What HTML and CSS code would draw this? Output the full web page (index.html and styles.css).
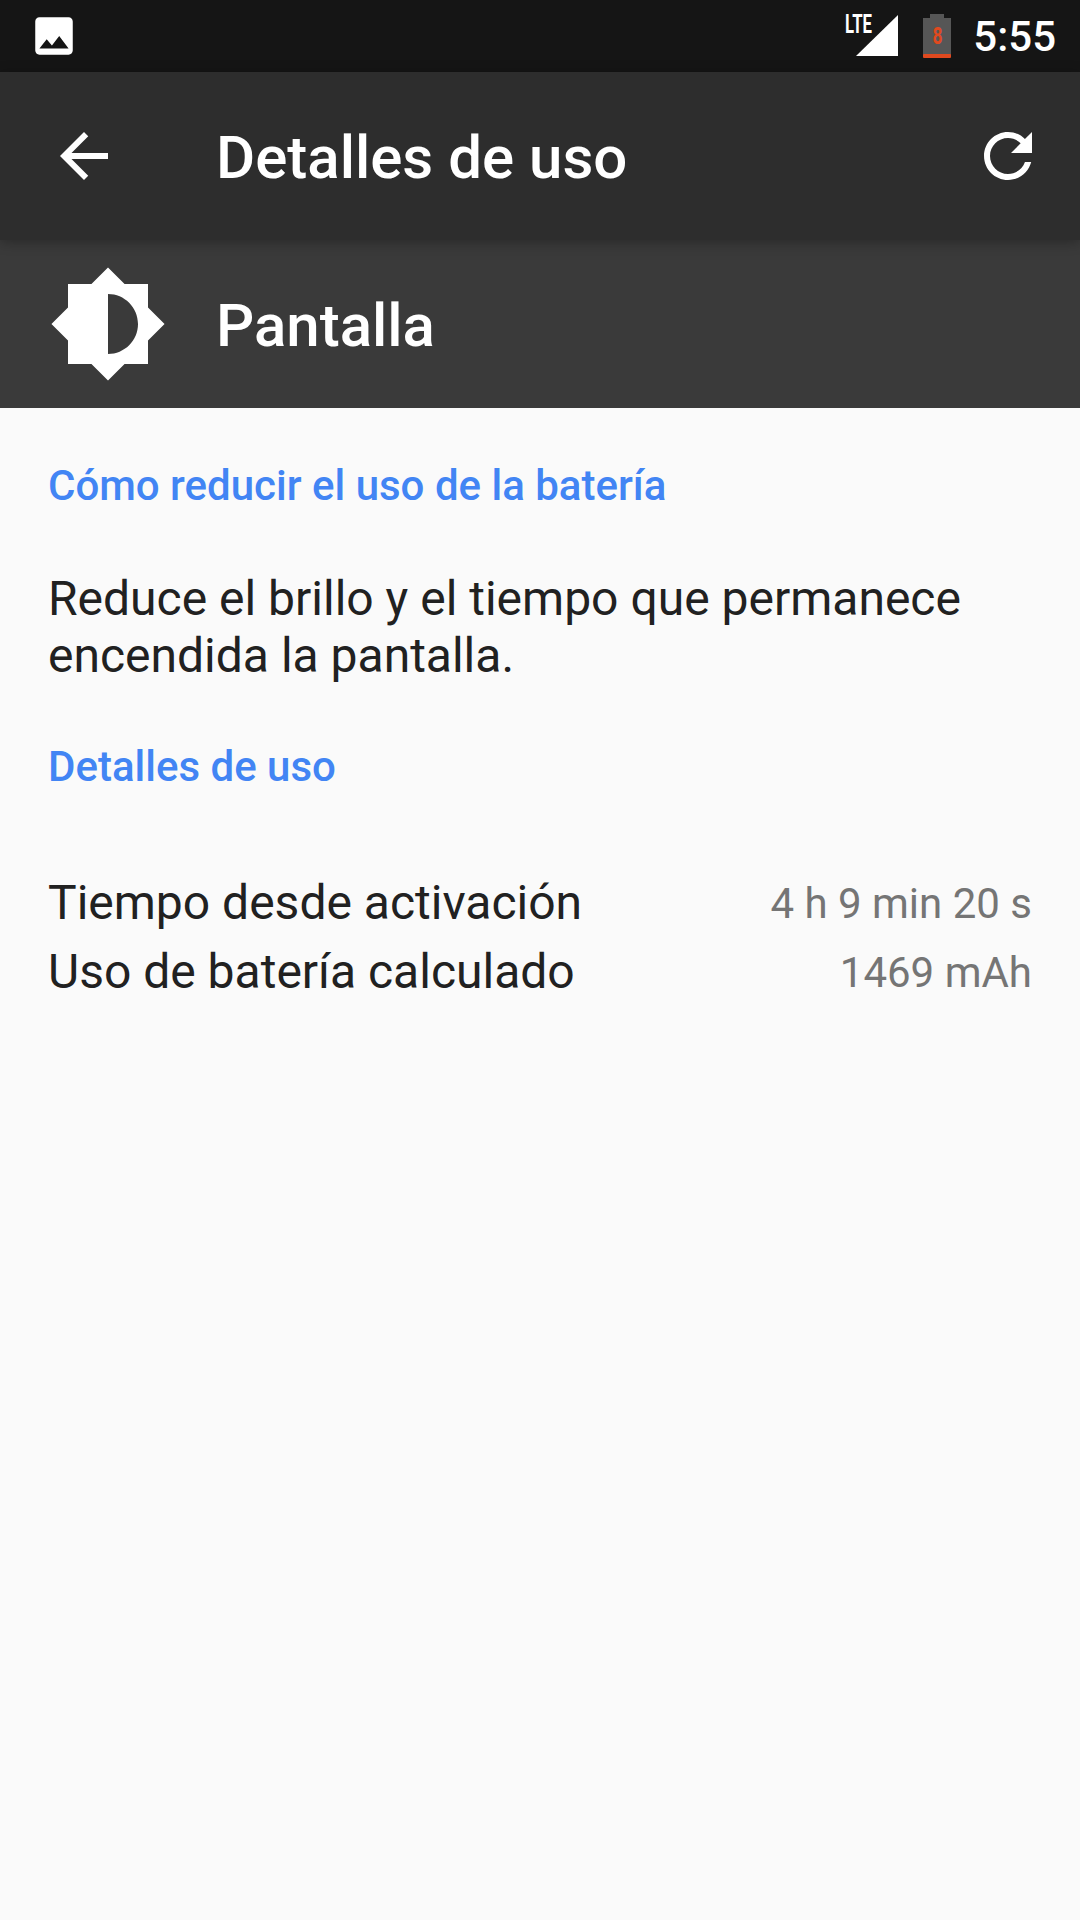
FILE: index.html
```html
<!DOCTYPE html>
<html lang="es">
<head>
  <meta charset="UTF-8" />
  <meta name="viewport" content="width=device-width, initial-scale=1.0"/>
  <title>Detalles de uso</title>
  <link rel="stylesheet" href="styles.css">
</head>
<body>
  <div class="status-bar">
    <svg class="status-image" viewBox="0 0 24 24">
      <path fill="#fff" d="M21 19V5c0-1.1-.9-2-2-2H5c-1.1 0-2 .9-2 2v14c0 1.100.9 2 2 2h14c1.100 0 2-.9 2-2zM8.500 13.500l2.500 3.010L14.500 12l4.500 6H5l3.500-4.500z"/>
    </svg>
    <div class="status-right">
      <svg class="status-signal" width="56" height="46" viewBox="0 0 56 46">
        <text class="lte" x="0" y="22" textLength="27" lengthAdjust="spacingAndGlyphs">LTE</text>
        <path fill="#fff" d="M11 45 53 4v41z"/>
      </svg>
      <svg class="status-battery" width="28" height="44" viewBox="0 0 28 44">
        <path fill="#565656" d="M7 0h14v4h7v37H0V4h7z"/>
        <rect y="40" width="28" height="4" rx="1" fill="#e0491f"/>
        <text class="battery-level" x="9.500" y="30" textLength="10" lengthAdjust="spacingAndGlyphs">8</text>
      </svg>
      <span class="status-time">5:55</span>
    </div>
  </div>

  <div class="toolbar">
    <svg class="icon" viewBox="0 0 24 24">
      <path fill="#fff" d="M20 11H7.830l5.590-5.590L12 4l-8 8 8 8 1.410-1.410L7.830 13H20v-2z"/>
    </svg>
    <h1 class="toolbar-title">Detalles de uso</h1>
    <svg class="icon" viewBox="0 0 24 24">
      <path fill="#fff" d="M17.650 6.350C16.200 4.900 14.210 4 12 4c-4.420 0-7.990 3.580-7.990 8s3.570 8 7.990 8c3.730 0 6.840-2.550 7.730-6h-2.080c-.82 2.330-3.040 4-5.650 4-3.310 0-6-2.690-6-6s2.690-6 6-6c1.660 0 3.140.69 4.220 1.780L13 11h7V4l-2.350 2.350z"/>
    </svg>
  </div>

  <div class="app-header">
    <svg class="app-icon" viewBox="0 0 24 24">
      <path fill="#fff" d="M20 15.310 23.310 12 20 8.690V4h-4.690L12 .69 8.690 4H4v4.690L.69 12 4 15.310V20h4.690L12 23.310 15.310 20H20v-4.690zM12 18V6c3.310 0 6 2.690 6 6s-2.690 6-6 6z"/>
    </svg>
    <div class="app-name">Pantalla</div>
  </div>

  <div class="content">
    <div class="section-title">Cómo reducir el uso de la batería</div>
    <p class="tip">Reduce el brillo y el tiempo que permanece encendida la pantalla.</p>
    <div class="section-title">Detalles de uso</div>
    <div class="details">
      <div class="row">
        <span class="row-label">Tiempo desde activación</span>
        <span class="row-value">4 h 9 min 20 s</span>
      </div>
      <div class="row">
        <span class="row-label">Uso de batería calculado</span>
        <span class="row-value">1469 mAh</span>
      </div>
    </div>
  </div>
</body>
</html>
```

FILE: styles.css
```css
* {
  box-sizing: border-box;
}

body {
  margin: 0;
  height: 1920px;
  overflow: hidden;
  font-family: Roboto, sans-serif;
  background: #fafafa;
  color: #212121;
  display: flex;
  flex-direction: column;
}

.status-bar {
  height: 72px;
  background: #151515;
  display: flex;
  align-items: center;
  justify-content: space-between;
  padding: 0 24px 0 29px;
}

.status-image {
  width: 50px;
  height: 50px;
}

.status-right {
  display: flex;
  align-items: center;
}

.status-signal {
  margin-top: -4px;
}

.lte {
  font-family: Roboto, sans-serif;
  font-weight: 700;
  font-size: 25px;
  fill: #fff;
}

.status-battery {
  margin-left: 22px;
}

.battery-level {
  font-family: Roboto, sans-serif;
  font-weight: 700;
  font-size: 23px;
  fill: #e0491f;
}

.status-time {
  margin-left: 22px;
  font-size: 42px;
  font-weight: 500;
  color: #fff;
}

.toolbar {
  position: relative;
  height: 168px;
  padding: 0 36px 0 48px;
  background: #2d2d2d;
  box-shadow: 0 2px 12px rgba(0, 0, 0, 0.3);
  display: flex;
  align-items: center;
}

.icon {
  width: 72px;
  height: 72px;
  flex-shrink: 0;
}

.toolbar-title {
  flex: 1;
  margin: 0 0 0 96px;
  padding-top: 2px;
  font-size: 60px;
  font-weight: 500;
  color: #fff;
}

.app-header {
  height: 168px;
  padding: 0 48px;
  background: #3a3a3a;
  display: flex;
  align-items: center;
}

.app-icon {
  width: 120px;
  height: 120px;
}

.app-name {
  margin-left: 48px;
  padding-top: 2px;
  font-size: 60px;
  font-weight: 500;
  color: #fff;
}

.content {
  padding: 52px 48px 0;
}

.section-title {
  font-size: 42px;
  line-height: 52px;
  font-weight: 500;
  color: #4285f4;
}

.tip {
  margin: 58px 0 57px;
  font-size: 48px;
  line-height: 57px;
}

.details {
  margin-top: 75px;
}

.row {
  display: flex;
  justify-content: space-between;
  align-items: center;
  height: 69px;
}

.row-label {
  font-size: 48px;
}

.row-value {
  padding-top: 2px;
  font-size: 42px;
  color: #757575;
}
```
